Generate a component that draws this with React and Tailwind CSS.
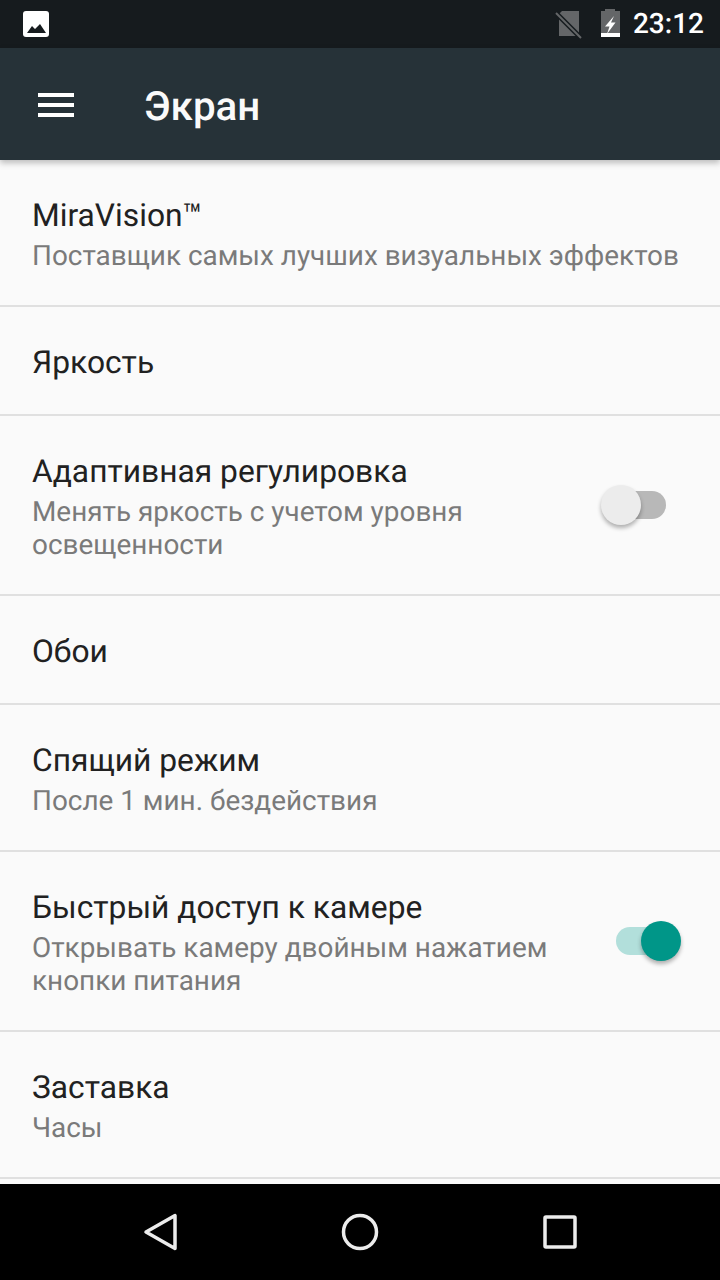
const font = { fontFamily: "Roboto, sans-serif" };

function Toggle({ on }) {
  return (
    <div className="relative w-[80px] h-[48px] shrink-0">
      <div className={on ? "absolute left-[15px] top-[10px] w-[50px] h-[28px] rounded-full bg-[#b2dfdb]" : "absolute left-[15px] top-[10px] w-[50px] h-[28px] rounded-full bg-[#b8b8b8]"} />
      <div className={on ? "absolute left-[40px] top-[4px] w-[40px] h-[40px] rounded-full bg-[#009688] shadow-[0_3px_4px_rgba(0,0,0,0.3)]" : "absolute left-[0px] top-[4px] w-[40px] h-[40px] rounded-full bg-[#ececec] shadow-[0_3px_4px_rgba(0,0,0,0.3)]"} />
    </div>
  );
}

function Row({ title, sub, h, toggle, on }) {
  return (
    <div className={`flex items-center justify-between pl-[32px] pr-[39px] border-b-2 border-[#e0e0e0] ${h}`}>
      <div className={sub ? "min-w-0 pt-[2px]" : "min-w-0 pt-[5px]"}>
        <div className="text-[31.75px] leading-[42px] text-[#212121]">{title}</div>
        {sub && <div className="mt-[2px] text-[27.9px] leading-[33px] text-[#7a7a7a] whitespace-pre">{sub}</div>}
      </div>
      {toggle && <Toggle on={on} />}
    </div>
  );
}

export default function App() {
  return (
    <div className="w-[720px] h-[1280px] flex flex-col bg-[#fafafa] overflow-hidden [text-rendering:geometricPrecision]" style={font}>
      <div className="h-[48px] shrink-0 bg-[#161b1e] flex items-center pl-[22px] pr-[16px]">
        <svg width="28" height="28" viewBox="0 0 28 28">
          <rect x="1" y="1" width="26" height="26" rx="3" fill="#fff" />
          <path d="M5 23 L10 16 L13 19 L18 14 L24 23 Z" fill="#161b1e" />
        </svg>
        <div className="flex-1" />
        <svg width="28" height="32" viewBox="0 0 28 32" className="mr-[17px]">
          <path d="M7 3 H24 V28 H4 V6 Z" fill="#646668" />
          <path d="M1 5 L26 30" stroke="#161b1e" strokeWidth="5" />
          <path d="M1 5 L26 30" stroke="#646668" strokeWidth="2" />
        </svg>
        <svg width="20" height="30" viewBox="0 0 20 30" className="mr-[13px]">
          <path d="M5 0 H15 V2 H20 V28 H1 V2 H5 Z" fill="#646668" />
          <rect x="1" y="24" width="19" height="4" fill="#fff" />
          <path d="M14 7 L5 17.5 H9.5 L7 25 L15.5 13.5 H11 Z" fill="#fff" />
        </svg>
        <div className="text-[28px] leading-none font-medium text-white">23:12</div>
      </div>
      <div className="relative z-10 h-[112px] shrink-0 bg-[#263238] flex items-center shadow-[0_3px_6px_rgba(0,0,0,0.25)]">
        <svg width="36" height="24" viewBox="0 0 36 24" className="ml-[38px] mb-[-1px]">
          <rect width="36" height="4" fill="#fff" />
          <rect y="10" width="36" height="4" fill="#fff" />
          <rect y="20" width="36" height="4" fill="#fff" />
        </svg>
        <div className="ml-[70px] mt-[7px] text-[40.3px] font-medium leading-none text-[#fafafa]">Экран</div>
      </div>
      <div className="flex-1 min-h-0">
        <Row h="h-[147px]" title="MiraVision™" sub="Поставщик самых лучших визуальных эффектов" />
        <Row h="h-[109px]" title="Яркость" />
        <Row h="h-[180px]" title="Адаптивная регулировка" sub={"Менять яркость с учетом уровня\nосвещенности"} toggle />
        <Row h="h-[109px]" title="Обои" />
        <Row h="h-[147px]" title="Спящий режим" sub="После 1 мин. бездействия" />
        <Row h="h-[180px]" title="Быстрый доступ к камере" sub={"Открывать камеру двойным нажатием\nкнопки питания"} toggle on />
        <Row h="h-[147px]" title="Заставка" sub="Часы" />
      </div>
      <div className="h-[96px] shrink-0 bg-black flex items-center justify-center gap-[120px]">
        <svg width="80" height="48" viewBox="0 0 80 48">
          <path d="M26 24 L55 7.5 V40.5 Z" fill="none" stroke="#ececec" strokeWidth="3.5" strokeLinejoin="round" />
        </svg>
        <svg width="80" height="48" viewBox="0 0 80 48">
          <circle cx="40" cy="24" r="16.5" fill="none" stroke="#ececec" strokeWidth="3.5" />
        </svg>
        <svg width="80" height="48" viewBox="0 0 80 48">
          <rect x="25" y="9" width="30" height="30" rx="1" fill="none" stroke="#ececec" strokeWidth="3.5" />
        </svg>
      </div>
    </div>
  );
}
